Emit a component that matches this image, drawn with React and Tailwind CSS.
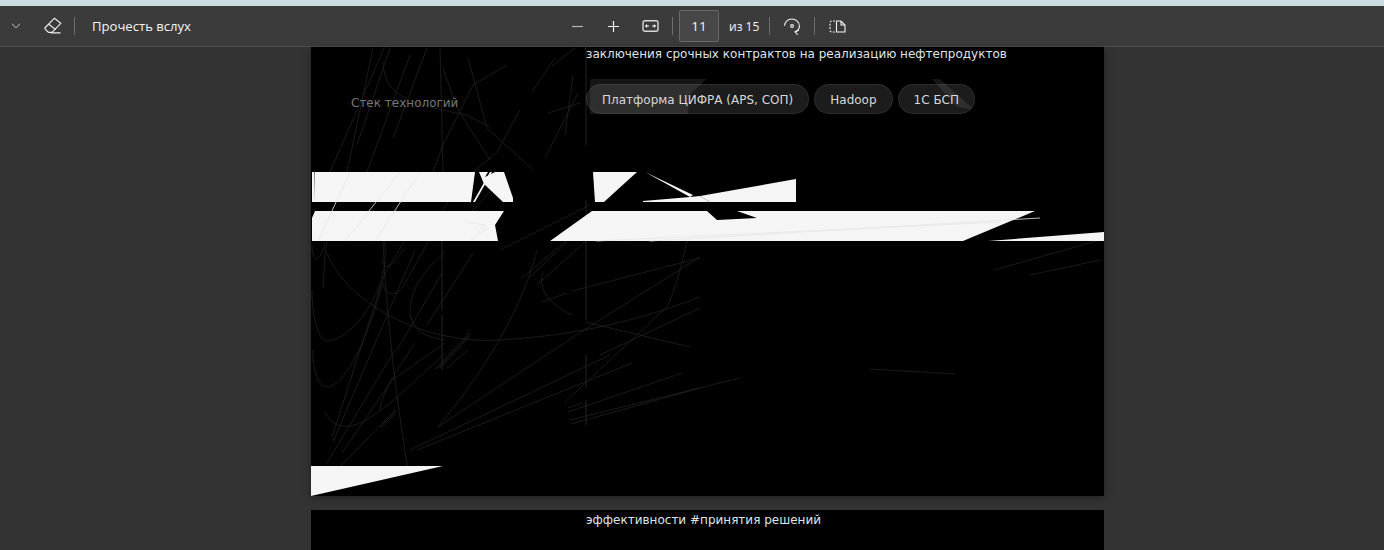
import React from "react";

const whites = [
  "M312 172L314 172L314 202L312 202Z",
  "M314.5 172L475 172L471 202L314 202Z",
  "M490 172L492 172L475 202L473 202Z",
  "M479 172L488 172L485 177L495 172L504 172L513 198L513 202L503 202L484 184Z",
  "M593 172L637 172L604 202L595 202Z",
  "M645 172L693 195L690 197Z",
  "M643 201L690 197L700 196L710 202L643 202Z",
  "M700 196L796 179L796 202L710 202Z",
  "M312 218L315 211L504 211L495 225L498 241L312 241Z",
  "M592 211L707 211L717 220L757 218L737 211L1035 211L963 241L550 241Z",
  "M988 241L1104 232L1104 241Z",
  "M311 466L443 466L311 496Z",
];

const lines = [
  "M327 253C345 300 420 345 500 340S640 320 700 297",
  "M312 290C312 315 318 341 327 341C345 341 375 310 383 273C386 260 385 250 385 240",
  "M313 350C312 365 317 387 327 387C345 387 370 335 382 283",
  "M325 412C332 425 340 427 348 426C365 425 385 410 445 353",
  "M332 437L385 273L405 240","M333 442L415 250","M383 240C385 290 392 373 408 470",
  "M327 240L325 257L323 288","M327 463L395 350","M342 453L392 380L445 343","M340 467L395 410",
  "M380 427L395 412","M381 428L396 413","M380 410C382 395 390 380 415 343",
  "M383 283C385 300 400 295 405 283L428 242","M382 260C385 272 392 268 405 247",
  "M410 310C412 285 425 270 445 252","M410 310C410 325 420 337 445 340",
  "M427 325L473 253","M397 350L442 273","M312 245C312 262 320 265 325 243",
  "M435 369L470 332","M437 369L470 334","M440 368L470 336","M447 368L468 350",
  "M537 250C525 300 490 365 438 427",
  "M522 278L567 240","M530 277L567 242","M537 285L586 241",
  "M543 273C538 285 545 303 572 315","M542 302L567 293","M572 291L700 258","M585 322L690 347",
  "M565 402L667 307C675 290 682 265 687 240","M438 427L587 328L700 257","M700 308L600 355",
  "M410 450L610 355","M417 450L632 363",
  "M568 412L682 373","M570 420L740 378","M571 424L700 388","M568 408L582 403",
  "M383 62C385 90 395 102 467 115L490 127","M468 58L487 128L533 170","M443 68L457 108L490 160",
  "M373 48L347 172","M390 48L357 145","M410 55L367 172","M427 48L393 138","M440 48L443 172",
  "M507 65L473 85L443 145L433 172","M520 110L497 152L473 172","M555 58L532 92","M573 75L565 135",
  "M578 93L545 158","M580 103L548 113","M552 66L575 48",
  "M330 172L385 46","M420 241L470 172","M445 241L505 175",
  "M500 250L590 205","M994 270L1100 240","M1030 275L1100 260","M870 369L955 374",
];
const verticals = ["M442 241L442 310","M442 315L442 370","M586 46L586 145","M586 200L586 320","M586 355L586 388","M586 400L586 425"];
const lightLines = ["M596 241L1000 222","M650 241L1040 218","M345 241L400 172","M318 241L350 172","M375 241L420 172","M466 222L485 225L478 232","M470 240L487 228"];

function Toolbar() {
  const ic = "shrink-0 text-[#f2f2f2]";
  return (
    <div className="relative flex h-[41px] items-center border-b border-[#4f4f4f] bg-[#3b3b3b] text-[#f5f5f5] [font-family:'Open_Sans',sans-serif]">
      <div className="absolute left-0 flex h-full items-center">
        <svg width="10" height="6" viewBox="0 0 10 6" className="ml-[11px] text-[#c5c5c5]" fill="none" stroke="currentColor"><path d="M1 .8L5 4.8L9 .8" /></svg>
        <svg width="18" height="18" viewBox="0 0 18 18" className={`${ic} ml-[23px]`} fill="none" stroke="currentColor" strokeWidth="1.1">
          <path d="M1.3 10.5L10.5 1.2L16.8 6.3L9 14.3C8.4 15 7.8 15.4 7 15.4H5.2C4.6 15.4 4 15.1 3.6 14.6L1.4 12.4C.9 11.8.8 11 1.3 10.5Z" />
          <path d="M4.8 7.2L11.6 12.6M7 15.9H16.5" />
        </svg>
        <div className="ml-[12px] h-[18px] w-px bg-[#6f6f6f]" />
        <span className="ml-[17px] pt-[1px] text-[13.1px]">Прочесть вслух</span>
      </div>
      <div className="absolute left-[570px] flex h-full items-center">
        <svg width="15" height="15" viewBox="0 0 15 15" className="text-[#b5b5b5]" stroke="currentColor" strokeWidth="1.2"><path d="M2 7.5H13" /></svg>
        <svg width="15" height="15" viewBox="0 0 15 15" className={`${ic} ml-[21px]`} stroke="currentColor" strokeWidth="1.2"><path d="M2 7.5H13M7.5 2V13" /></svg>
        <svg width="17" height="14" viewBox="0 0 17 14" className={`${ic} ml-[21px]`} fill="none" stroke="currentColor" strokeWidth="1.4"><rect x="1" y="1.7" width="15" height="10.6" rx="2" stroke="#d8d8d8" /><path d="M3.7 7H7M13.3 7H10M5 5.7L3.7 7L5 8.3M12 5.7L13.3 7L12 8.3" strokeWidth="1.1" /></svg>
        <div className="ml-[13px] h-[18px] w-px bg-[#6f6f6f]" />
        <div className="ml-[6px] flex h-[32px] w-[40px] items-center justify-center rounded-[2px] border border-[#6a6a6a] bg-[#474747] pt-[1px] text-[13.5px]">11</div>
        <span className="ml-[10px] pt-[1px] text-[12px]">из 15</span>
        <div className="ml-[10px] h-[18px] w-px bg-[#6f6f6f]" />
        <svg width="18" height="18" viewBox="0 0 18 18" className={`${ic} ml-[13px]`} fill="none" stroke="currentColor" strokeWidth="1.1">
          <path d="M1.5 8.8C1.8 4.6 5 2 8.8 2C13 2 16.4 5.2 16.4 9C16.4 11.6 15 13.8 12 15" />
          <path d="M16 12.8L12 15L14.6 17.6" />
          <circle cx="9" cy="9" r="1.4" />
        </svg>
        <div className="ml-[13px] h-[18px] w-px bg-[#6f6f6f]" />
        <svg width="17" height="15" viewBox="0 0 17 15" className={`${ic} ml-[14px]`} fill="none" stroke="currentColor" strokeWidth="1.1">
          <path d="M6 2H3C1.8 2 1 2.8 1 4V11C1 12.2 1.8 13 3 13H6" strokeDasharray="2 1.4" />
          <path d="M7.5 2H12L16 6V13H7.5V2ZM12 2V6H16" />
        </svg>
      </div>
    </div>
  );
}

const pill = "flex h-[30px] items-center rounded-full border border-[#ffffff14] bg-[#ffffff1c] px-[15px] pt-[1px]";

export default function App() {
  return (
    <div className="h-[550px] overflow-hidden bg-[#333333]">
      <div className="h-[6px] bg-[#c9dde3]" />
      <Toolbar />
      <div className="flex flex-col items-center pl-[31px]">
        <div className="w-[793px]">
          <div className="relative h-[449px] overflow-hidden bg-black text-[12px] shadow-[0_2px_8px_rgba(0,0,0,0.35)] [font-family:'DejaVu_Sans',sans-serif]">
            <svg className="absolute left-0 top-[-1px]" width="793" height="450" viewBox="311 46 793 450" fill="none">
              {lines.map((d, i) => <path key={i} d={d} stroke="#252525" strokeWidth="0.7" />)}
              {verticals.map((d, i) => <path key={i} d={d} stroke="#222222" strokeWidth="1" />)}
              <path d="M590 79L707 79L690 94L688 114L590 114Z" fill="#161616" />
              <path d="M932 79L940 79L973 109L957 107Z" fill="#161616" />
              {whites.map((d, i) => <path key={i} d={d} fill="#f5f5f5" />)}
              {lightLines.map((d, i) => <path key={i} d={d} stroke="#e6e6e6" strokeWidth="0.8" />)}
            </svg>
            <div className="relative pl-[275px] leading-[15px] text-[#dfe5ea]">заключения срочных контрактов на реализацию нефтепродуктов</div>
            <div className="relative mt-[22px] flex items-start pl-[40px]">
              <div className="mt-[12px] w-[235px] leading-[15px] text-[#777777]">Стек технологий</div>
              <div className="flex gap-[5px] text-[#d8d8d8]">
                <span className={pill}>Платформа ЦИФРА (APS, СОП)</span>
                <span className={pill}>Hadoop</span>
                <span className={pill}>1С БСП</span>
              </div>
            </div>
          </div>
          <div className="mt-[14px] h-[60px] bg-black pl-[275px] pt-[3px] text-[12px] leading-[15px] text-[#dfe5ea] [font-family:'DejaVu_Sans',sans-serif]">эффективности #принятия решений</div>
        </div>
      </div>
    </div>
  );
}
